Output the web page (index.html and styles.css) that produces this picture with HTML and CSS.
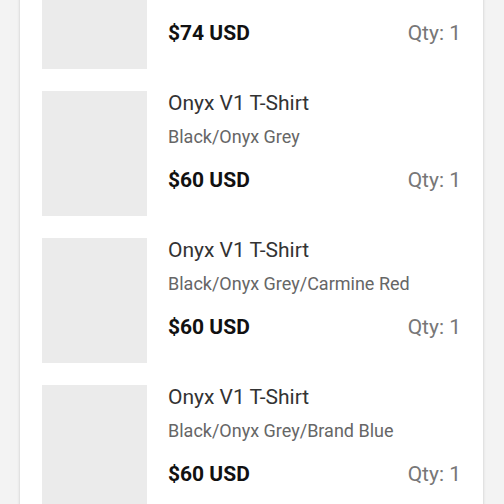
FILE: index.html
```html
<!DOCTYPE html>
<html>
<head>
<meta charset="utf-8">
<link rel="stylesheet" href="styles.css">
</head>
<body>
<div class="card">
  <div class="item">
    <div class="thumb"></div>
    <div class="info">
      <div class="title">Onyx V1 Hoodie</div>
      <div class="variant">Black/Onyx Grey</div>
      <div class="row"><span class="price">$74 USD</span><span class="qty">Qty: 1</span></div>
    </div>
  </div>
  <div class="item">
    <div class="thumb"></div>
    <div class="info">
      <div class="title">Onyx V1 T-Shirt</div>
      <div class="variant">Black/Onyx Grey</div>
      <div class="row"><span class="price">$60 USD</span><span class="qty">Qty: 1</span></div>
    </div>
  </div>
  <div class="item">
    <div class="thumb"></div>
    <div class="info">
      <div class="title">Onyx V1 T-Shirt</div>
      <div class="variant">Black/Onyx Grey/Carmine Red</div>
      <div class="row"><span class="price">$60 USD</span><span class="qty">Qty: 1</span></div>
    </div>
  </div>
  <div class="item">
    <div class="thumb"></div>
    <div class="info">
      <div class="title">Onyx V1 T-Shirt</div>
      <div class="variant">Black/Onyx Grey/Brand Blue</div>
      <div class="row"><span class="price">$60 USD</span><span class="qty">Qty: 1</span></div>
    </div>
  </div>
</div>
</body>
</html>
```
FILE: styles.css
```css
html, body {
  margin: 0;
  padding: 0;
  height: 504px;
  overflow: hidden;
  background: #f3f3f3;
  font-family: Roboto, "Liberation Sans", sans-serif;
}
.card {
  margin: -56px 0 0 20px;
  width: 463px;
  background: #fff;
  box-shadow: 0 0 3px rgba(0,0,0,0.18);
  display: flex;
  flex-direction: column;
  gap: 22px;
  padding-bottom: 40px;
}
.item {
  display: flex;
  gap: 21px;
  padding: 0 22px;
}
.thumb {
  width: 105px;
  height: 125px;
  background: #ebebeb;
  flex: none;
}
.info {
  flex: 1;
  display: flex;
  flex-direction: column;
}
.title {
  font-size: 21px;
  line-height: 24px;
  color: #333;
}
.variant {
  margin-top: 11px;
  font-size: 18px;
  line-height: 22px;
  color: #666;
}
.row {
  margin-top: 20px;
  display: flex;
  justify-content: space-between;
  line-height: 24px;
  font-size: 21px;
}
.price {
  font-weight: 700;
  color: #111;
}
.qty {
  color: #777;
}
```
